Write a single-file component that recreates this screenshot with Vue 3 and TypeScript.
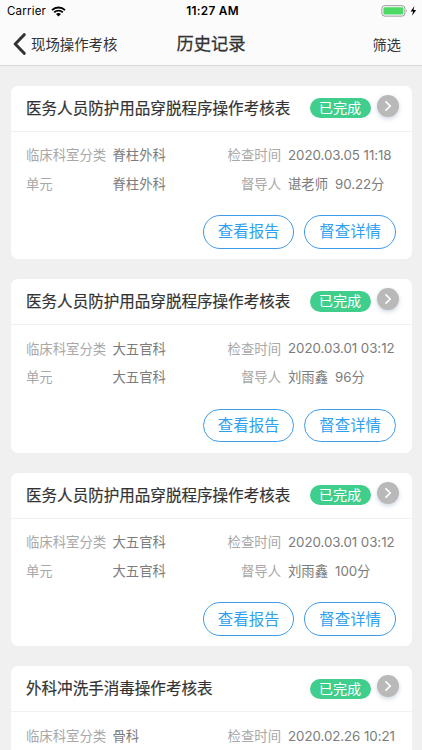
<script setup lang="ts">
interface RecordItem {
  title: string
  department: string
  time: string
  review?: { unit: string; supervisor: string; score: string }
}

const protective = '医务人员防护用品穿脱程序操作考核表'

const records: RecordItem[] = [
  { title: protective, department: '脊柱外科', time: '2020.03.05 11:18', review: { unit: '脊柱外科', supervisor: '谌老师', score: '90.22分' } },
  { title: protective, department: '大五官科', time: '2020.03.01 03:12', review: { unit: '大五官科', supervisor: '刘雨鑫', score: '96分' } },
  { title: protective, department: '大五官科', time: '2020.03.01 03:12', review: { unit: '大五官科', supervisor: '刘雨鑫', score: '100分' } },
  { title: '外科冲洗手消毒操作考核表', department: '骨科', time: '2020.02.26 10:21' },
]
</script>

<template>
  <div class="screen">
    <header class="top">
      <div class="status">
        <div class="carrier">
          <span>Carrier</span>
          <svg class="wifi" width="15" height="11" viewBox="0 0 15 11">
            <path d="M1 4.1a9.4 9.4 0 0 1 13 0M3.2 6.4a6.2 6.2 0 0 1 8.6 0" fill="none" stroke="#000" stroke-width="1.9" />
            <path d="M7.5 10.6 5 8.1a3.6 3.6 0 0 1 5 0z" fill="#000" />
          </svg>
        </div>
        <span class="clock">11:27 AM</span>
        <div class="power">
          <svg width="37" height="13" viewBox="0 0 37 13">
            <rect x="0.9" y="0.7" width="23" height="10.4" rx="2.8" fill="#fff" stroke="#999" />
            <rect x="2.4" y="2.2" width="20" height="7.4" rx="1.3" fill="#4cd964" />
            <path d="M25 4.1q1.5 1.8 0 3.6z" fill="#999" />
            <path d="M33.4 1 29.6 6.6h2.5l-1.1 4.2L35.2 5h-2.7z" fill="#000" />
          </svg>
        </div>
      </div>
      <nav class="nav">
        <div class="back">
          <svg width="13" height="22" viewBox="0 0 13 22">
            <path d="M11.2 1.7 2.2 11l9 9.3" fill="none" stroke="#333" stroke-width="3" stroke-linecap="round" stroke-linejoin="round" />
          </svg>
          <span>现场操作考核</span>
        </div>
        <h1>历史记录</h1>
        <span class="filter">筛选</span>
      </nav>
    </header>

    <main class="list">
      <article v-for="(item, i) in records" :key="i" class="card">
        <div class="head">
          <h2>{{ item.title }}</h2>
          <span class="badge">已完成</span>
          <span class="go">
            <svg width="8" height="12" viewBox="0 0 8 12">
              <path d="M1.5 1.4 6.2 6l-4.7 4.6" fill="none" stroke="#fff" stroke-width="1.6" />
            </svg>
          </span>
        </div>
        <div class="body">
          <div class="row">
            <span class="label wide">临床科室分类</span>
            <span class="value first">{{ item.department }}</span>
            <span class="label right">检查时间</span>
            <span class="value time digits">{{ item.time }}</span>
          </div>
          <div v-if="item.review" class="row">
            <span class="label wide">单元</span>
            <span class="value first">{{ item.review.unit }}</span>
            <span class="label right">督导人</span>
            <span class="value time">{{ item.review.supervisor }}</span>
            <span class="value score digits">{{ item.review.score }}</span>
          </div>
        </div>
        <div v-if="item.review" class="actions">
          <button type="button">查看报告</button>
          <button type="button">督查详情</button>
        </div>
      </article>
    </main>
  </div>
</template>

<style>
body {
  margin: 0;
  overflow: hidden;
  background: #f0f0f0;
}
</style>

<style scoped>
.screen {
  box-sizing: border-box;
  height: 750px;
  overflow: hidden;
  background: #f0f0f0;
  color: #333;
  font-family: Inter, "Noto Sans CJK SC", sans-serif;
}
.top {
  box-sizing: border-box;
  height: 66px;
  background: #fbfbfb;
  border-bottom: 1px solid #d8d8d8;
}
.status {
  display: grid;
  grid-template-columns: 1fr auto 1fr;
  align-items: center;
  height: 22px;
  padding: 0 4px 0 7px;
  color: #000;
  font-size: 11.5px;
}
.carrier {
  display: flex;
  align-items: center;
  gap: 5px;
  letter-spacing: 0.2px;
}
.clock {
  font-weight: 600;
  font-size: 11.8px;
  letter-spacing: 0.3px;
}
.power {
  display: flex;
  justify-content: flex-end;
}
.nav {
  display: grid;
  grid-template-columns: 1fr auto 1fr;
  align-items: center;
  height: 43px;
  padding: 0 21px;
}
.back {
  display: flex;
  align-items: center;
  gap: 5px;
  margin-left: -8px;
  font-size: 14.4px;
}
h1 {
  margin: 0 0 3px;
  font-size: 17.3px;
  font-weight: 400;
  -webkit-text-stroke: 0.28px #333;
}
.filter {
  justify-self: end;
  font-size: 14.2px;
}
.list {
  display: flex;
  flex-direction: column;
  gap: 20.1px;
  padding: 19.5px 10.5px 0;
}
.card {
  flex: none;
  box-sizing: border-box;
  height: 173.5px;
  border-radius: 7px;
  background: #fff;
}
.head {
  display: flex;
  align-items: center;
  box-sizing: border-box;
  height: 46px;
  padding: 0 13px 0 15.5px;
  border-bottom: 1px solid #f1f1f1;
}
h2 {
  flex: 1;
  margin: 0;
  padding-bottom: 3px;
  font-size: 15.55px;
  font-weight: 400;
  white-space: nowrap;
  -webkit-text-stroke: 0.2px #333;
}
.badge {
  width: 61px;
  height: 20.5px;
  margin-right: 6px;
  border-radius: 11px;
  background: #40ce8d;
  color: #fff;
  font-size: 14.2px;
  line-height: 20.5px;
  text-align: center;
}
.go {
  display: flex;
  align-items: center;
  justify-content: center;
  width: 22px;
  height: 22px;
  margin-bottom: 5px;
  border-radius: 50%;
  background: #b9b9b9;
  box-shadow: 0 2px 4px rgba(90, 110, 150, 0.28);
}
.body {
  padding: 9px 0 0 15.5px;
}
.row {
  display: flex;
  align-items: center;
  height: 28.5px;
  font-size: 13.35px;
  white-space: nowrap;
}
.label {
  color: #a8a8a8;
}
.value {
  color: #7c7c7c;
}
.wide {
  width: 86.5px;
}
.first {
  width: 90px;
}
.right {
  width: 78.5px;
  text-align: right;
}
.time {
  margin-left: 7px;
}
.score {
  margin-left: 7px;
}
.digits {
  letter-spacing: -0.08px;
}
.actions {
  display: flex;
  justify-content: flex-end;
  gap: 10px;
  padding: 17.6px 15.6px 0 0;
}
button {
  box-sizing: border-box;
  width: 91.5px;
  height: 33.5px;
  padding: 0;
  border: 1px solid #409be8;
  border-radius: 17px;
  background: #fff;
  color: #2f9ff0;
  font-family: inherit;
  font-size: 15.4px;
  line-height: 31px;
}
</style>
